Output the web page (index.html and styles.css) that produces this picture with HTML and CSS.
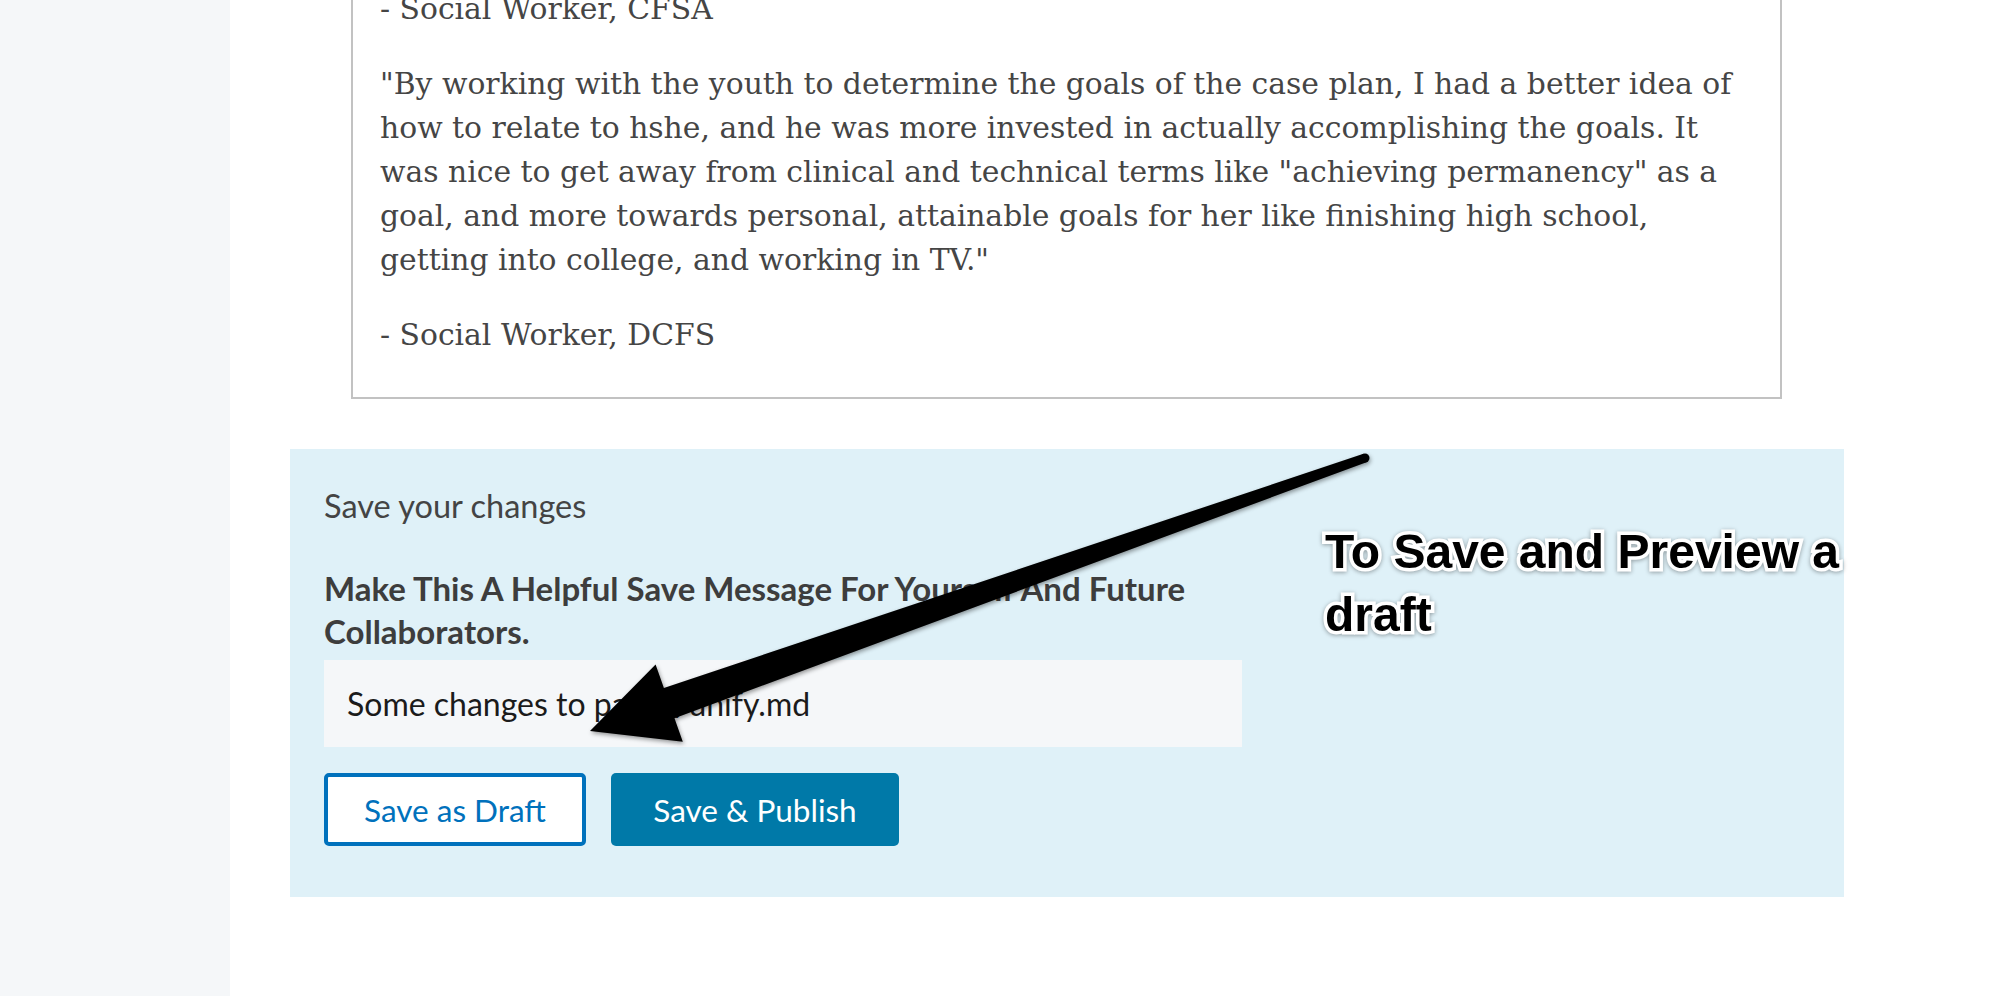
FILE: index.html
```html
<!DOCTYPE html>
<html lang="en">
<head>
<meta charset="utf-8">
<title>Save your changes</title>
<link rel="stylesheet" href="styles.css">
</head>
<body>
<div class="layout">
  <aside class="sidebar"></aside>
  <main class="main">
    <section class="quote">
      <p>- Social Worker, CFSA</p>
      <p>"By working with the youth to determine the goals of the case plan, I had a better idea of<br>how to relate to hshe, and he was more invested in actually accomplishing the goals. It<br>was nice to get away from clinical and technical terms like "achieving permanency" as a<br>goal, and more towards personal, attainable goals for her like finishing high school,<br>getting into college, and working in TV."</p>
      <p>- Social Worker, DCFS</p>
    </section>
    <section class="save-panel">
      <h2 class="save-title">Save your changes</h2>
      <label class="save-label" for="msg">Make This A Helpful Save Message For Yourself And Future<br>Collaborators.</label>
      <input class="save-input" id="msg" type="text" value="Some changes to pages/unify.md">
      <div class="save-actions">
        <button class="btn btn-outline">Save as Draft</button>
        <button class="btn btn-primary">Save &amp; Publish</button>
      </div>
    </section>
  </main>
</div>
<div class="annotation">To Save and Preview a<br>draft</div>
<svg class="arrow" width="2002" height="996" viewBox="0 0 2002 996">
  <g class="arrow-shape">
    <polygon points="590,731 655.6,664.4 663.9,688 1363.5,453.8 1366.5,462.2 674.5,718.2 682.8,741.8"/>
    <circle cx="1365" cy="458" r="4.5"/>
  </g>
</svg>
</body>
</html>
```
FILE: styles.css
```css
html, body {
  margin: 0;
  padding: 0;
  background: #ffffff;
  height: 100%;
  overflow: hidden;
}

.layout {
  display: flex;
  min-height: 996px;
}

.sidebar {
  width: 230px;
  flex: 0 0 230px;
  background: #f5f7f9;
}

.main {
  flex: 1;
  padding-left: 60px;
}

.quote {
  width: 1431px;
  box-sizing: border-box;
  margin: -43px 0 0 61px;
  padding: 28px 27px 40px;
  border: 2px solid #c2c2c2;
  font-family: "DejaVu Serif", "Liberation Serif", serif;
  font-size: 29.8px;
  line-height: 44px;
  color: #454545;
}

.quote p {
  margin: 31px 0 0;
  white-space: nowrap;
}

.quote p:first-child {
  margin-top: 0;
}

.save-panel {
  width: 1554px;
  box-sizing: border-box;
  margin-top: 50px;
  padding: 37px 34px 51px;
  background: #dff1f8;
  display: flex;
  flex-direction: column;
  align-items: flex-start;
  font-family: Lato, "Open Sans", sans-serif;
}

.save-title {
  margin: 0;
  font-size: 32.5px;
  line-height: 40px;
  font-weight: 400;
  color: #444444;
}

.save-label {
  display: block;
  margin-top: 41px;
  font-size: 33px;
  line-height: 43px;
  font-weight: 700;
  color: #3d3d3d;
}

.save-input {
  margin-top: 7px;
  width: 918px;
  height: 87px;
  box-sizing: border-box;
  border: none;
  outline: none;
  background: #f5f7f9;
  padding: 0 23px;
  font-family: Lato, "Open Sans", sans-serif;
  font-size: 32px;
  color: #1b1b1b;
}

.save-actions {
  margin-top: 26px;
  display: flex;
  gap: 25px;
}

.btn {
  height: 73px;
  box-sizing: border-box;
  border-radius: 5px;
  font-family: Lato, "Open Sans", sans-serif;
  font-size: 31.5px;
  padding: 0 20px;
  cursor: pointer;
}

.btn-outline {
  width: 262px;
  background: #ffffff;
  color: #0071bc;
  border: 4px solid #0071bc;
}

.btn-primary {
  width: 288px;
  background: #0079a8;
  color: #ffffff;
  border: none;
}

.annotation {
  position: absolute;
  left: 1325px;
  top: 520px;
  font-family: "Liberation Sans", Arial, sans-serif;
  font-weight: 700;
  font-size: 48px;
  line-height: 63px;
  color: #000000;
  -webkit-text-stroke: 7px #ffffff;
  paint-order: stroke fill;
  filter: drop-shadow(0 1px 2px rgba(0, 0, 0, 0.35));
}

.arrow {
  position: absolute;
  left: 0;
  top: 0;
  pointer-events: none;
}

.arrow-shape {
  fill: #000000;
  filter: drop-shadow(1px 2px 2px rgba(0, 0, 0, 0.4));
}
```
